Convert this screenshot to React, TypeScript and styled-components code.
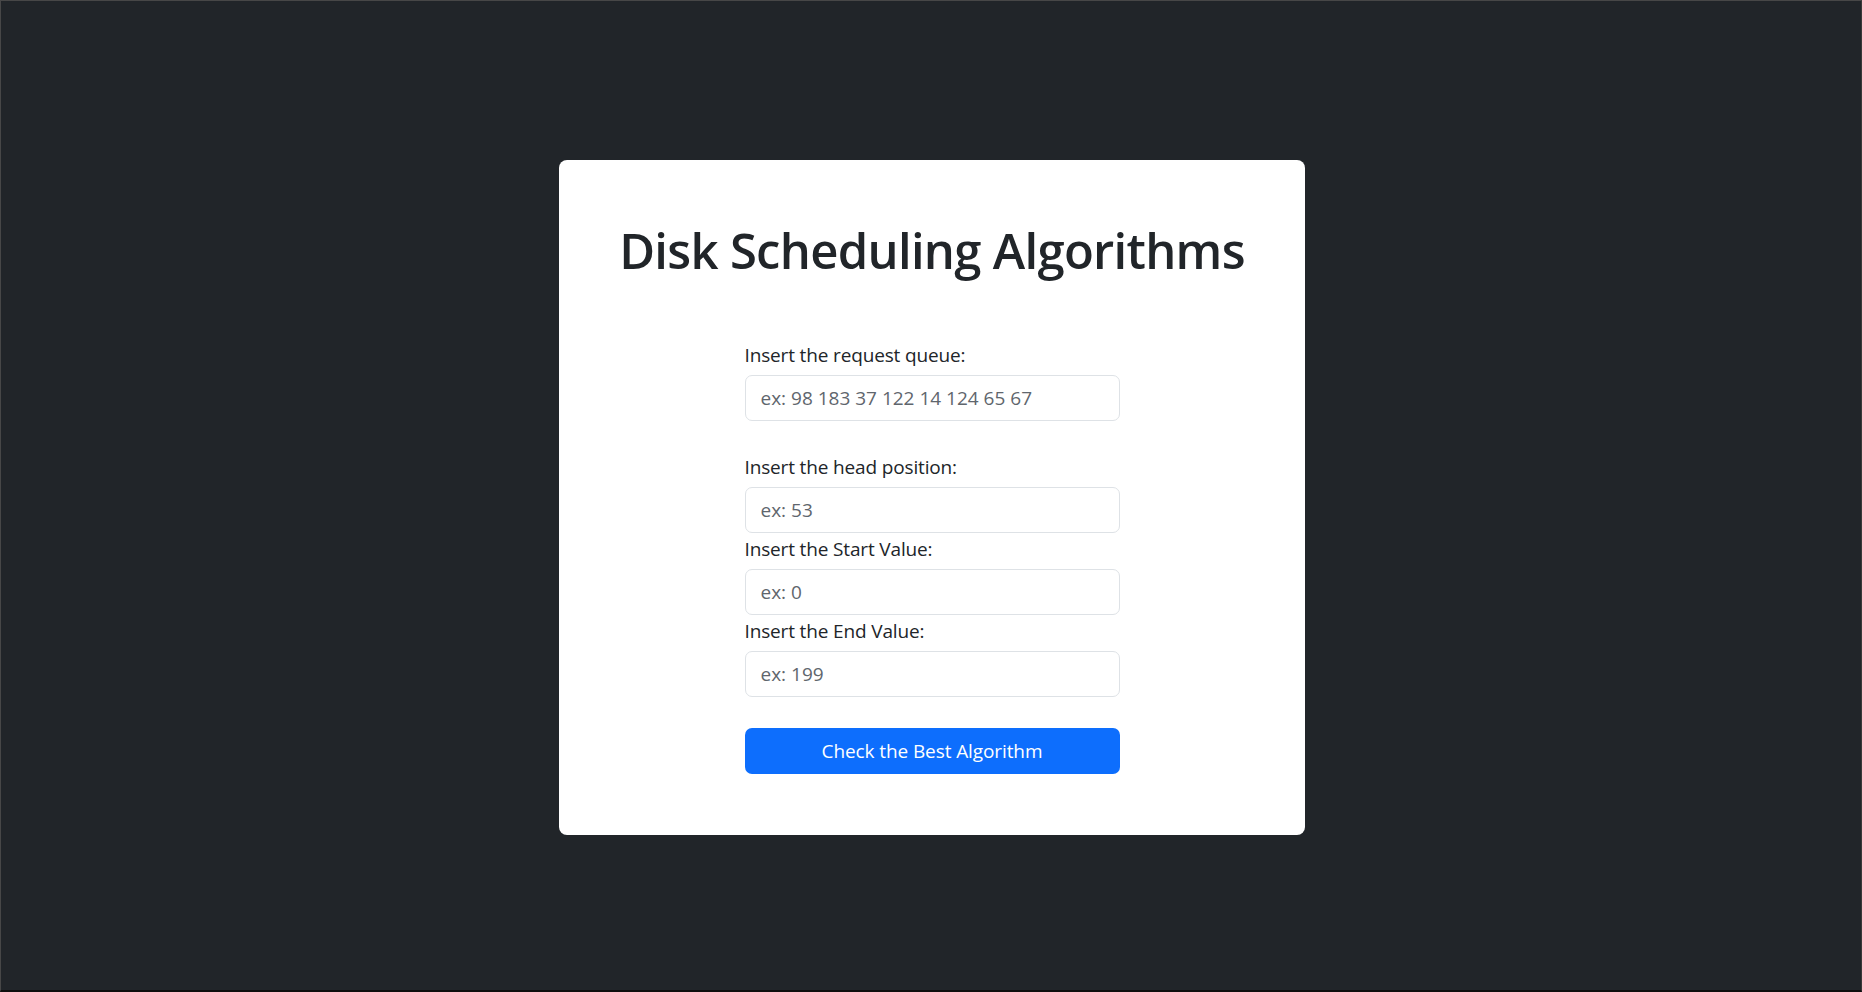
import * as React from "react";
import styled, { createGlobalStyle } from "styled-components";

const GlobalStyle = createGlobalStyle`
  html, body {
    margin: 0;
    padding: 0;
    background-color: #212529;
  }
  * {
    box-sizing: border-box;
  }
`;

const Page = styled.div`
  height: 992px;
  display: flex;
  align-items: center;
  justify-content: center;
  background-color: #212529;
  border-top: 1px solid #474747;
  border-left: 1px solid #474747;
  border-right: 1px solid #3a3a3a;
  border-bottom: 2px solid #0e0e0e;
  font-family: "Open Sans", "Noto Sans", sans-serif;
  color: #212529;
`;

const Card = styled.div`
  width: 746px;
  padding: 60px 60px 61px;
  margin-top: 3px;
  margin-left: 2px;
  background-color: #fff;
  border-radius: 8px;
  display: flex;
  flex-direction: column;
  align-items: center;
`;

const Title = styled.h1`
  margin: 0 0 60px;
  font-size: 49px;
  line-height: 60px;
  font-weight: 600;
  letter-spacing: -0.7px;
  text-align: center;
  white-space: nowrap;
`;

const Form = styled.form`
  width: 375px;
  display: flex;
  flex-direction: column;
`;

const Label = styled.label`
  display: block;
  font-size: 19px;
  line-height: 30px;
  letter-spacing: -0.15px;
  margin-bottom: 5px;
`;

const Input = styled.input<{ $gap?: boolean }>`
  display: block;
  width: 100%;
  height: 46px;
  padding: 0 15px;
  font-family: inherit;
  font-size: 19px;
  color: #212529;
  background-color: #fff;
  border: 1px solid #dee2e6;
  border-radius: 7px;
  margin-bottom: ${(p) => (p.$gap ? "31px" : "1px")};
  outline: none;

  &::placeholder {
    color: #5f666d;
  }
`;

const Button = styled.button`
  width: 100%;
  height: 46px;
  margin-top: 30px;
  font-family: inherit;
  font-size: 19px;
  letter-spacing: -0.1px;
  color: #fff;
  background-color: #0d6efd;
  border: none;
  border-radius: 7px;
  cursor: pointer;
`;

const fields = [
  { id: "queue", label: "Insert the request queue:", placeholder: "ex: 98 183 37 122 14 124 65 67", gap: true },
  { id: "head", label: "Insert the head position:", placeholder: "ex: 53" },
  { id: "start", label: "Insert the Start Value:", placeholder: "ex: 0" },
  { id: "end", label: "Insert the End Value:", placeholder: "ex: 199" },
];

export default function App() {
  return (
    <>
      <GlobalStyle />
      <Page>
        <Card>
          <Title>Disk Scheduling Algorithms</Title>
          <Form onSubmit={(e) => e.preventDefault()}>
            {fields.map((f) => (
              <React.Fragment key={f.id}>
                <Label htmlFor={f.id}>{f.label}</Label>
                <Input id={f.id} type="text" placeholder={f.placeholder} $gap={f.gap} />
              </React.Fragment>
            ))}
            <Button type="submit">Check the Best Algorithm</Button>
          </Form>
        </Card>
      </Page>
    </>
  );
}
